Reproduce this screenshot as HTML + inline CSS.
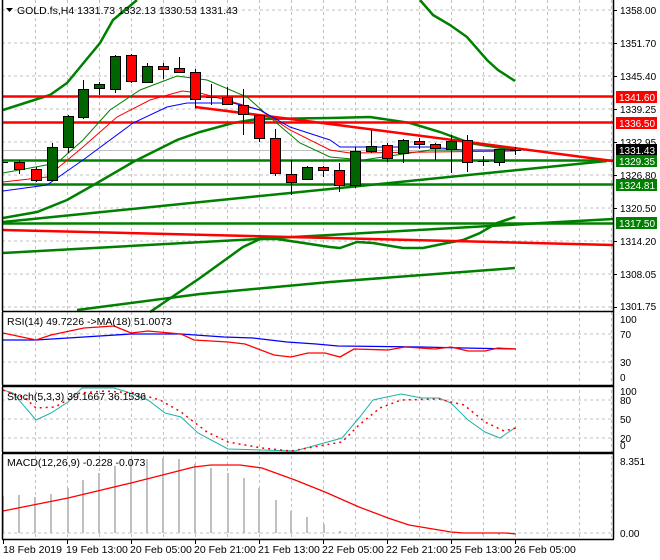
<!DOCTYPE html>
<html><head><meta charset="utf-8"><style>
html,body{margin:0;padding:0;background:#fff;}
svg{display:block;font-family:"Liberation Sans",sans-serif;font-size:10.5px;}
.ax{font-size:10px;}
</style></head><body>
<svg width="660" height="560" viewBox="0 0 660 560" xmlns="http://www.w3.org/2000/svg">
<rect width="660" height="560" fill="#fff"/>
<g stroke="#c0c0c0" stroke-dasharray="3,3" stroke-width="1">
<path d="M2,10H613M2,43H613M2,76H613M2,109H613M2,142H613M2,175H613M2,208H613M2,241H613M2,274H613M2,307H613"/>
<path d="M2,334H613M2,362H613M2,400H613M2,419H613M2,438H613M2,533H613"/>
<path d="M35.5,0V539M67.5,0V539M99.5,0V539M131.5,0V539M163.5,0V539M195.5,0V539M227.5,0V539M259.5,0V539M291.5,0V539M323.5,0V539M355.5,0V539M387.5,0V539M419.5,0V539M451.5,0V539M483.5,0V539M515.5,0V539M547.5,0V539M579.5,0V539M611.5,0V539"/>
</g>
<g stroke="#c0c0c0" stroke-width="2">
<path d="M3,533V496M19,533V495M35,533V497M51,533V494M68,533V488M83,533V480M99,533V473M115,533V466M131,533V459M147,533V459M163,533V458M179,533V459M195,533V464M211,533V468M228,533V473M244,533V478M259,533V488M276,533V500M291,533V511M307,533V517M324,533V524M340,533V531M483,533V535M499,533V535"/>
</g>
<path d="M2,150.5H613" stroke="#c0c0c0" stroke-width="1"/>
<g fill="none" stroke="#008000" stroke-width="2.5">
<polyline points="3,110 50,95 67,83 100,43 113,20 137,0"/>
<polyline points="420,0 433,15 450,25 467,37 487,60 498,70 515,81"/>
<polyline points="3,218 37,212 67,200 97,183 133,162 177,140 200,132 233,123 257,119 330,118 370,117 410,123 440,132 470,143 515,150"/>
<polyline points="150,312 200,278 243,247 260,239 277,239 330,247 340,248 357,242 373,243 403,248 423,248 447,243 463,240 480,233 497,223 515,217"/>
<polyline points="77,310 200,294 330,282 515,268"/>
<path d="M2,160.5H613M2,184.5H613M2,223.5H613"/>
<polyline points="3,222 607,161"/>
<polyline points="3,253 330,235 613,219"/>
</g>
<g fill="none" stroke="#ff0000" stroke-width="2.5">
<path d="M2,96.5H613M2,122.5H613"/>
<polyline points="195,107 330,124 613,161"/>
<polyline points="3,230 330,238 613,245"/>
</g>
<g fill="none" stroke-width="1">
<polyline stroke="#008000" points="3,173 57,163 83,140 110,110 140,90 177,76 207,80 247,97 273,120 300,143 330,157 363,160 430,150 513,150"/>
<polyline stroke="#ff0000" points="3,182 47,177 83,147 117,117 150,100 182,91 200,93 233,102 260,110 290,130 330,150 350,153 430,152 515,151"/>
<polyline stroke="#0000ff" points="3,191 47,185 83,160 133,123 167,107 187,103 233,103 260,110 290,127 330,140 340,147 430,147 463,150 515,150"/>
</g>
<g stroke="#000" stroke-width="1">
<path d="M19.5,160V174M36.5,167V182M52.5,143V181M68.5,115V153M83.5,80V119M99.5,82V95M115.5,55V93M131.5,54V83M147.5,63V83M163.5,63V79M179.5,57V73M195.5,69V108M211.5,84V105M227.5,87V105M243.5,89V135M259.5,115V142M275.5,129V176M291.5,160V195M307.5,166V180M323.5,166V177M339.5,163V192M355.5,147V188M371.5,130V153M387.5,143V162M403.5,139V163M419.5,138V149M435.5,143V160M451.5,135V173M467.5,135V172M483.5,156V166M499.5,149V166M515.5,147V155"/>
<path d="M206,97.5H217M478,161.5H489M510,150.5H521M3,162.5H8"/>
<g fill="#ff0000">
<rect x="14.5" y="162.5" width="10" height="7"/><rect x="31.5" y="169.5" width="10" height="11"/><rect x="126.5" y="55.5" width="10" height="26"/><rect x="158.5" y="66.5" width="10" height="3"/><rect x="174.5" y="68.5" width="10" height="4"/><rect x="190.5" y="72.5" width="10" height="27"/><rect x="222.5" y="97.5" width="10" height="7"/><rect x="238.5" y="105.5" width="10" height="9"/><rect x="254.5" y="115.5" width="10" height="23"/><rect x="270.5" y="138.5" width="10" height="35"/><rect x="286.5" y="174.5" width="10" height="8"/><rect x="318.5" y="167.5" width="10" height="3"/><rect x="334.5" y="170.5" width="10" height="15"/><rect x="382.5" y="145.5" width="10" height="13"/><rect x="414.5" y="141.5" width="10" height="3"/><rect x="430.5" y="144.5" width="10" height="4"/><rect x="462.5" y="140.5" width="10" height="22"/>
</g>
<g fill="#006400">
<rect x="47.5" y="147.5" width="10" height="33"/><rect x="63.5" y="116.5" width="10" height="31"/><rect x="78.5" y="89.5" width="10" height="28"/><rect x="94.5" y="84.5" width="10" height="4"/><rect x="110.5" y="56.5" width="10" height="33"/><rect x="142.5" y="66.5" width="10" height="16"/><rect x="302.5" y="167.5" width="10" height="12"/><rect x="350.5" y="151.5" width="10" height="34"/><rect x="366.5" y="146.5" width="10" height="5"/><rect x="398.5" y="140.5" width="10" height="13"/><rect x="446.5" y="141.5" width="10" height="8"/><rect x="494.5" y="149.5" width="10" height="13"/>
</g>
</g>
<polyline fill="none" stroke="#0000ff" stroke-width="1.3" points="3,340 36,340 84,337 131,334 181,334 224,337 253,338 287,342 316,344 338,346 422,347 464,348 516,349"/>
<polyline fill="none" stroke="#ff0000" stroke-width="1.3" points="3,333 36,340 51,335 84,328 114,326 131,333 148,331 181,334 194,340 228,342 245,344 274,355 291,357 308,353 325,353 340,357 354,349 388,350 405,347 435,349 451,347 468,351 485,351 498,348 516,349"/>
<polyline fill="none" stroke="#20b2aa" stroke-width="1" points="3,390 13,393 36,420 51,413 68,402 82,388 114,388 127,392 148,400 165,413 181,417 198,433 228,449 262,450 295,451 342,438 359,418 373,400 401,394 422,398 439,398 451,403 468,420 485,432 500,438 516,427"/>
<polyline fill="none" stroke="#ff0000" stroke-width="1.5" stroke-dasharray="2,4" points="3,390 25,398 36,408 55,407 80,393 105,391 135,393 160,400 181,412 207,432 228,442 262,448 291,451 325,445 342,442 359,425 380,408 401,400 439,399 464,405 485,422 504,431 516,428"/>
<polyline fill="none" stroke="#ff0000" stroke-width="1.3" points="3,511 68,498 131,483 194,467 211,465 240,465 262,468 295,480 325,492 359,507 388,518 409,525 451,532 464,533 506,533 516,534"/>
<g fill="none" stroke="#000" stroke-width="1.5">
<path d="M2.5,0V311M613.5,0V539"/>
<path d="M2,311.5H614M2,385.5H614M2,452.5H614M2,539.5H614"/>
<path d="M2.5,312V385M2.5,387V452M2.5,454V539M2,386.5H614M2,453.5H614"/>
</g>
<path d="M3.5,539V544M67.5,539V544M131.5,539V544M195.5,539V544M259.5,539V544M323.5,539V544M387.5,539V544M451.5,539V544M515.5,539V544" stroke="#000"/>
<path d="M613,10.5H617M613,43.5H617M613,76.5H617M613,109.5H617M613,142.5H617M613,175.5H617M613,208.5H617M613,241.5H617M613,274.5H617M613,307.5H617" stroke="#000"/>
<path d="M6,8H13L9.5,12Z" fill="#000"/>
<text x="17" y="14" fill="#000">GOLD.fs,H4  1331.73 1332.13 1330.53 1331.43</text>
<g fill="#000" class="ax">
<text x="620" y="14">1358.00</text><text x="620" y="47">1351.70</text><text x="620" y="80">1345.40</text><text x="620" y="113">1339.25</text><text x="620" y="146">1332.95</text><text x="620" y="179">1326.80</text><text x="620" y="212">1320.50</text><text x="620" y="245">1314.20</text><text x="620" y="278">1308.05</text><text x="620" y="310">1301.75</text>
</g>
<g class="ax">
<rect x="616" y="91" width="41" height="12" fill="#ff0000"/><text x="619" y="101" fill="#fff" textLength="36">1341.60</text>
<rect x="616" y="117" width="41" height="12" fill="#ff0000"/><text x="619" y="127" fill="#fff" textLength="36">1336.50</text>
<rect x="616" y="144" width="41" height="12" fill="#000"/><text x="619" y="154" fill="#fff" textLength="36">1331.43</text>
<rect x="616" y="155" width="41" height="12" fill="#008000"/><text x="619" y="165" fill="#fff" textLength="36">1329.35</text>
<rect x="616" y="179" width="41" height="12" fill="#008000"/><text x="619" y="189" fill="#fff" textLength="36">1324.81</text>
<rect x="616" y="217" width="41" height="12" fill="#008000"/><text x="619" y="227" fill="#fff" textLength="36">1317.50</text>
</g>
<g fill="#000">
<text x="7" y="325">RSI(14) 49.7226  -&gt;MA(18) 51.0073</text>
<text x="7" y="400">Stoch(5,3,3) 39.1667 36.1536</text>
<text x="7" y="466">MACD(12,26,9) -0.228 -0.073</text>
<g class="ax">
<text x="620" y="323">100</text><text x="620" y="338">70</text><text x="620" y="366">30</text><text x="620" y="381">0</text>
<text x="620" y="395">100</text><text x="620" y="404">80</text><text x="620" y="423">50</text><text x="620" y="442">20</text><text x="620" y="449">0</text>
<text x="620" y="465">8.351</text><text x="620" y="537">0.00</text>
</g>
<text x="3" y="553">18 Feb 2019</text><text x="66" y="553">19 Feb 13:00</text><text x="130" y="553">20 Feb 05:00</text><text x="194" y="553">20 Feb 21:00</text><text x="258" y="553">21 Feb 13:00</text><text x="322" y="553">22 Feb 05:00</text><text x="386" y="553">22 Feb 21:00</text><text x="450" y="553">25 Feb 13:00</text><text x="514" y="553">26 Feb 05:00</text>
</g>
</svg>
</body></html>
